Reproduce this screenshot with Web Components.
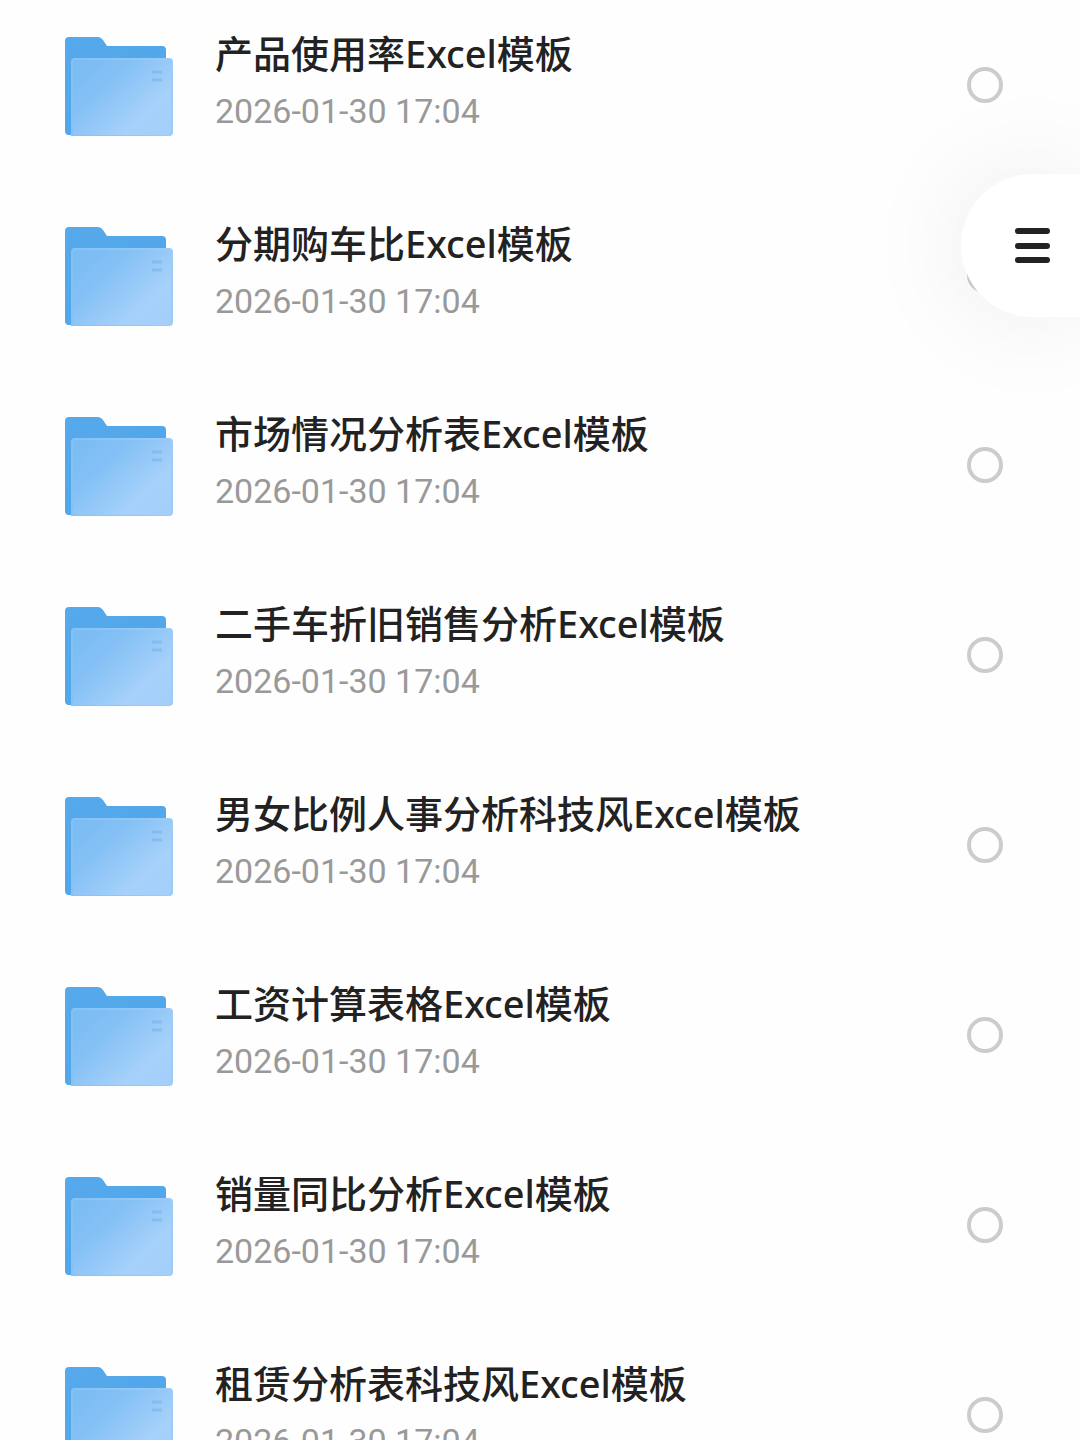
<!DOCTYPE html>
<html lang="zh-CN">
<head>
<meta charset="utf-8">
<meta name="viewport" content="width=device-width, initial-scale=1">
<title>文件列表</title>
<style>
  body { margin: 0; background: #fefefe; color: #222; font-family: Roboto, "Noto Sans CJK SC", sans-serif; }
</style>
</head>
<body>
<file-browser>
  <file-row date="2026-01-30 17:04">产品使用率Excel模板</file-row>
  <file-row date="2026-01-30 17:04">分期购车比Excel模板</file-row>
  <file-row date="2026-01-30 17:04">市场情况分析表Excel模板</file-row>
  <file-row date="2026-01-30 17:04">二手车折旧销售分析Excel模板</file-row>
  <file-row date="2026-01-30 17:04">男女比例人事分析科技风Excel模板</file-row>
  <file-row date="2026-01-30 17:04">工资计算表格Excel模板</file-row>
  <file-row date="2026-01-30 17:04">销量同比分析Excel模板</file-row>
  <file-row date="2026-01-30 17:04">租赁分析表科技风Excel模板</file-row>
  <menu-tab slot="overlay"></menu-tab>
</file-browser>
<script>
class Base extends HTMLElement {
  constructor() {
    super();
    this.attachShadow({ mode: 'open' }).innerHTML = this.constructor.markup;
  }
}

class FolderIcon extends Base {
  static markup = `
    <style>
      :host { display: block; }
      svg { display: block; width: 108px; height: 110px; }
    </style>
    <svg viewBox="0 0 108 110" aria-hidden="true">
      <defs>
        <linearGradient id="back" x1="0" y1="0" x2="1" y2="1">
          <stop offset="0" stop-color="#56a9eb"/><stop offset="1" stop-color="#4ea6ea"/>
        </linearGradient>
        <linearGradient id="front" x1="0" y1="0.1" x2="1" y2="0.9">
          <stop offset="0" stop-color="#7abcf3"/><stop offset=".3" stop-color="#84c0f5"/>
          <stop offset=".75" stop-color="#a6d1fa"/><stop offset="1" stop-color="#a4cffa"/>
        </linearGradient>
        <linearGradient id="edge" x1="0" y1="0" x2="1" y2="0">
          <stop offset="0" stop-color="#84c2f6"/><stop offset="1" stop-color="#9ccbf8"/>
        </linearGradient>
      </defs>
      <path fill="url(#back)" d="M4 7H33Q36 7 38 10L42 16H97Q101 16 101 20V60L60 105H4Q0 105 0 101V11Q0 7 4 7Z"/>
      <path fill="url(#edge)" d="M10 28H104Q108 28 108 32V102Q108 106 104 106H6V32Q6 28 10 28Z"/>
      <path fill="url(#front)" d="M11 30H106V102Q106 105 103 105H8V33Q8 30 11 30Z"/>
      <path fill="none" stroke="#80b9ee" stroke-opacity=".8" stroke-width="3" d="M87 42H97M87 50H97"/>
    </svg>`;
}

class FileRow extends Base {
  static markup = `
    <style>
      :host { display: block; }
      label { display: flex; align-items: center; gap: 42px; height: 110px; padding: 30px 77px 50px 65px; cursor: pointer; }
      .text { flex: 1; min-width: 0; align-self: flex-start; display: flex; flex-direction: column; gap: 10px; }
      .name { font-family: "Noto Sans", "Noto Sans CJK SC", sans-serif; font-size: 38px; font-weight: 500; line-height: 47px; white-space: nowrap; }
      time { font-size: 34px; line-height: 48px; color: #999; }
      input { appearance: none; box-sizing: border-box; flex: none; width: 36px; height: 36px; margin: 0; border: 4px solid #ccc; border-radius: 50%; }
      input:checked { border: 10px solid #3d9be9; }
    </style>
    <label>
      <folder-icon></folder-icon>
      <span class="text"><span class="name"><slot></slot></span><time></time></span>
      <input type="checkbox">
    </label>`;
  connectedCallback() {
    this.shadowRoot.querySelector('time').textContent = this.getAttribute('date');
  }
}

class MenuTab extends Base {
  static markup = `
    <style>
      :host { display: block; position: absolute; top: 174px; right: 0; }
      button { display: flex; align-items: center; justify-content: flex-end; box-sizing: border-box; width: 119px; height: 143px; padding: 0 29px; border: 0; border-radius: 72px 0 0 72px; background: #fff; box-shadow: 0 0 110px rgba(0, 0, 0, .08); cursor: pointer; }
      svg { display: block; width: 37px; height: 37px; }
    </style>
    <button type="button" aria-label="菜单">
      <svg viewBox="0 0 37 37" aria-hidden="true"><path fill="none" stroke="#222" stroke-width="6" stroke-linecap="round" d="M4 4H33M4 19H33M4 33H33"/></svg>
    </button>`;
}

class FileBrowser extends Base {
  static markup = `
    <style>
      :host { display: block; position: relative; height: 100vh; overflow: hidden; }
      main { height: 100%; overflow-y: auto; scrollbar-width: none; }
    </style>
    <main><slot></slot></main>
    <slot name="overlay"></slot>`;
}

customElements.define('folder-icon', FolderIcon);
customElements.define('file-row', FileRow);
customElements.define('menu-tab', MenuTab);
customElements.define('file-browser', FileBrowser);
</script>
</body>
</html>
